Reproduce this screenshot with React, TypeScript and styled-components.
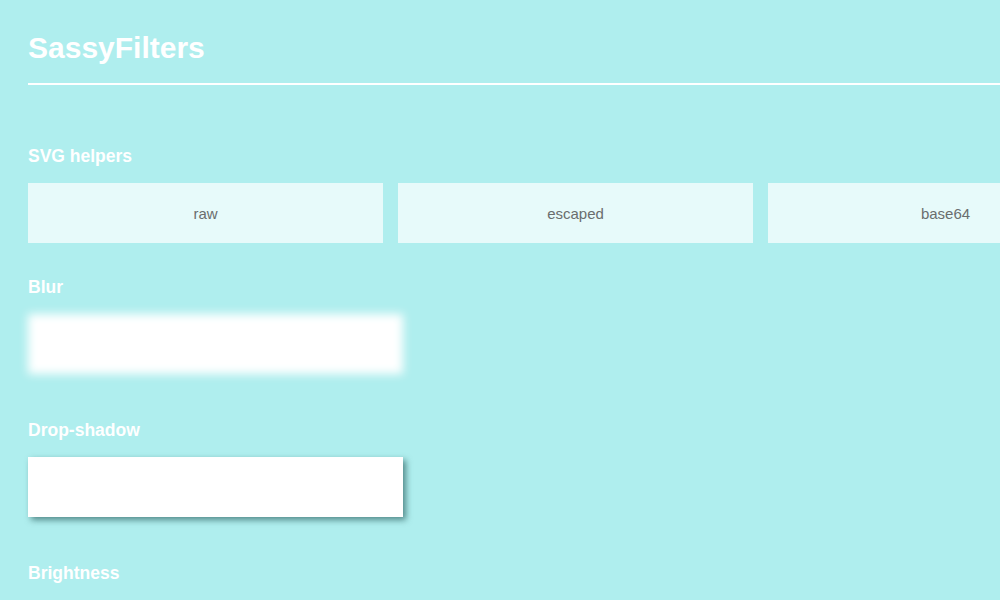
import React from 'react';
import styled, { createGlobalStyle } from 'styled-components';

const GlobalStyle = createGlobalStyle`
  html, body {
    margin: 0;
    padding: 0;
    overflow: hidden;
    background: #afeeee;
  }
  body {
    font-family: "Liberation Sans", Arial, sans-serif;
  }
`;

const Page = styled.div`
  width: 1095px;
  padding: 30px 0 0 28px;
`;

const Title = styled.h1`
  margin: 0 0 17px;
  font-size: 30px;
  line-height: 36px;
  font-weight: 700;
  color: #fff;
`;

const Rule = styled.hr`
  margin: 0 0 61px;
  border: 0;
  height: 2px;
  background: #fff;
`;

const Section = styled.section`
  display: flow-root;
  & + & {
    margin-top: 34px;
  }
`;

const Heading = styled.h2`
  margin: 0 0 17px;
  font-size: 17.5px;
  line-height: 20px;
  font-weight: 700;
  color: #fff;
`;

const HelperRow = styled.div`
  display: grid;
  grid-template-columns: repeat(3, 355px);
  gap: 15px;
`;

const HelperButton = styled.button`
  height: 60px;
  border: 0;
  padding: 0;
  background: rgba(255, 255, 255, 0.7);
  font-family: "Liberation Sans", Arial, sans-serif;
  font-size: 15px;
  color: #6a6e6e;
  cursor: pointer;
`;

const FilterBox = styled.div<{ $filter: string }>`
  width: 375px;
  height: 60px;
  margin-bottom: 12px;
  background: #fff;
  filter: ${({ $filter }) => $filter};
`;

const helpers = ['raw', 'escaped', 'base64'];

const filters = [
  { name: 'Blur', filter: 'blur(5px)' },
  { name: 'Drop-shadow', filter: 'drop-shadow(3px 3px 3px rgba(20, 70, 70, 0.6))' },
  { name: 'Brightness', filter: 'brightness(1.2)' },
];

export default function App() {
  return (
    <>
      <GlobalStyle />
      <Page>
        <Title>SassyFilters</Title>
        <Rule />
        <Section>
          <Heading>SVG helpers</Heading>
          <HelperRow>
            {helpers.map((h) => (
              <HelperButton key={h}>{h}</HelperButton>
            ))}
          </HelperRow>
        </Section>
        {filters.map((f) => (
          <Section key={f.name}>
            <Heading>{f.name}</Heading>
            <FilterBox $filter={f.filter} />
          </Section>
        ))}
      </Page>
    </>
  );
}
